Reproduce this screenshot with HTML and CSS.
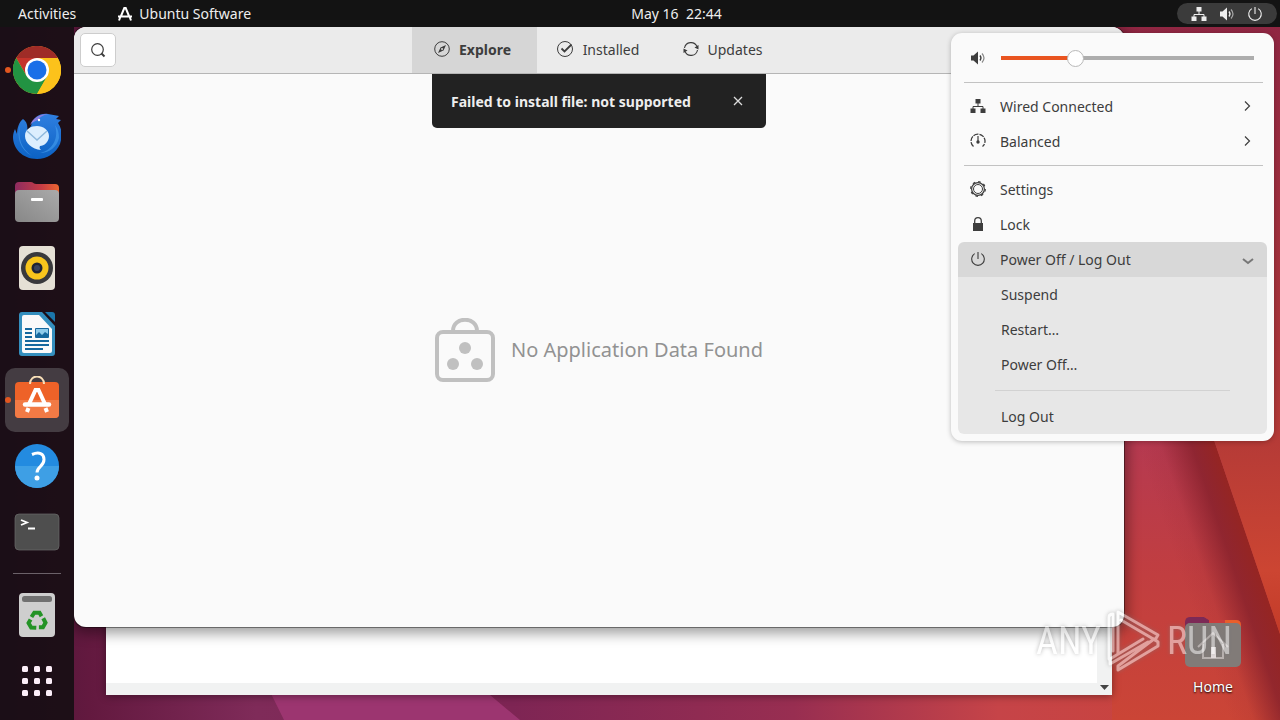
FILE: index.html
```html
<!DOCTYPE html>
<html lang="en">

<head>
    <meta charset="UTF-8">
    <meta name="viewport" content="width=device-width, initial-scale=1.0">
    <title>Ubuntu Software</title>
    <link rel="stylesheet" href="styles.css">
</head>

<body>
    <!-- shared symbols -->
    <svg class="symbols" aria-hidden="true">
        <symbol id="network" viewBox="0 0 16 16">
            <path d="M5.500 1h5v4.500h-5zM.5 10.500h5V15h-5zM10.500 10.500h5V15h-5z" fill="currentColor"/>
            <path d="M8 5v3.500M3 11V8.500h10V11" fill="none" stroke="currentColor"/>
        </symbol>
        <symbol id="volume" viewBox="0 0 16 16">
            <path d="M1 5.500h2.500L8 1.500v13L3.500 10.500H1z" fill="currentColor"/>
            <path d="M10 5.500q2 2.500 0 5" fill="none" stroke="currentColor" stroke-width="1.300"/>
            <path d="M12 3.500q4 4.500 0 9" fill="none" stroke="currentColor" stroke-width="1.200" opacity=".6"/>
        </symbol>
        <symbol id="power" viewBox="0 0 16 16">
            <path d="M8 1v7M4.800 2.600a6.300 6.300 0 1 0 6.400 0" fill="none" stroke="currentColor" stroke-width="1.100"/>
        </symbol>
        <symbol id="chevron" viewBox="0 0 16 16">
            <path d="M6 3.500l4.500 4.500L6 12.500" fill="none" stroke="currentColor" stroke-width="1.200"/>
        </symbol>
    </svg>

    <header class="topbar">
        <div class="topbar-left">
            <button class="activities">Activities</button>
            <button class="app-menu">
                <svg width="16" height="16" viewBox="0 0 16 16" fill="none" stroke="#fff" stroke-width="2">
                    <path d="M4 10L7.300 2h1.400L12 10M1 10.500h14M3.300 11L2 14.500M12.700 11l1.300 3.500"/>
                </svg>
                Ubuntu Software
            </button>
        </div>
        <button class="clock">May 16&nbsp; 22:44</button>
        <button class="status" aria-label="System menu">
            <svg width="16" height="16"><use href="#network"/></svg>
            <svg width="16" height="16"><use href="#volume"/></svg>
            <svg width="16" height="16"><use href="#power"/></svg>
        </button>
    </header>

    <main class="desktop">
        <svg class="wallpaper" viewBox="0 0 1280 720" preserveAspectRatio="none" aria-hidden="true">
            <defs>
                <linearGradient id="base" x1="0" x2="1" y1="0" y2="0">
                    <stop offset="0" stop-color="#4b1638"/>
                    <stop offset=".07" stop-color="#63193f"/>
                    <stop offset=".2" stop-color="#7f2b59"/>
                    <stop offset=".4" stop-color="#7e2554"/>
                    <stop offset=".62" stop-color="#982e51"/>
                    <stop offset=".78" stop-color="#c64448"/>
                    <stop offset="1" stop-color="#ca4337"/>
                </linearGradient>
                <linearGradient id="right" x1="0" x2="0" y1="0" y2="1">
                    <stop offset="0" stop-color="#7b2045"/>
                    <stop offset=".3" stop-color="#a02c45"/>
                    <stop offset=".62" stop-color="#b63a50"/>
                    <stop offset=".8" stop-color="#c13e40"/>
                    <stop offset="1" stop-color="#cb4536"/>
                </linearGradient>
                <linearGradient id="fold" gradientUnits="userSpaceOnUse" x1="1143" y1="464" x2="1214" y2="440">
                    <stop offset="0" stop-color="#85202a" stop-opacity="0"/>
                    <stop offset=".3" stop-color="#85202a" stop-opacity=".1"/>
                    <stop offset=".7" stop-color="#85202a" stop-opacity=".8"/>
                    <stop offset="1" stop-color="#962522"/>
                </linearGradient>
                <linearGradient id="corner" x1="0" x2="0" y1="0" y2="1">
                    <stop offset="0" stop-color="#8e2543"/>
                    <stop offset=".6" stop-color="#ab3639"/>
                    <stop offset=".9" stop-color="#cc4532"/>
                    <stop offset="1" stop-color="#c33b28"/>
                </linearGradient>
            </defs>
            <rect width="1280" height="720" fill="url(#base)"/>
            <path d="M238 627h205l47 68 30 25H284z" fill="#9c3570"/>
            <path d="M1112 0h168v720h-168z" fill="url(#right)"/>
            <path d="M1112 440h102l66 194v86h-168z" fill="url(#fold)"/>
            <path d="M1060 0h220v634L1214 440z" fill="url(#corner)"/>
        </svg>

        <nav class="dock" aria-label="Dock">
            <button class="dock-item running" aria-label="Google Chrome">
                <svg width="48" height="48" viewBox="0 0 48 48">
                    <circle cx="24" cy="24" r="24" fill="#fcc21b"/>
                    <path d="M3.200 12A24 24 0 0 1 44.800 12H24L13.600 30z" fill="#c5332b"/>
                    <path d="M3.200 12A24 24 0 0 0 24 48L34.400 30 24 24 13.600 30z" fill="#229342"/>
                    <path d="M24 12h20.800A24 24 0 0 1 24 48l10.400-18z" fill="#fcc21b"/>
                    <path d="M3.200 12A24 24 0 0 1 44.800 12z" fill="#8f2926" opacity=".7"/>
                    <circle cx="24" cy="24" r="12" fill="#fff"/>
                    <circle cx="24" cy="24" r="9.500" fill="#1a6fe8"/>
                </svg>
            </button>
            <button class="dock-item" aria-label="Thunderbird">
                <svg width="48" height="48" viewBox="0 0 48 48">
                    <defs>
                        <linearGradient id="bird" x1="0" x2="0" y1="0" y2="1">
                            <stop offset="0" stop-color="#2f7fe0"/>
                            <stop offset="1" stop-color="#0c62c4"/>
                        </linearGradient>
                    </defs>
                    <path d="M10 7c4 3 5 7 4 12l4-5C20 5 27 1 35 2l11 2-3 3 5 1-3 3c5 7 4 15 2 21-4 9-13 15-23 15C9 47 0 36 0 25c0-3 1-6 2-8l2 5C4 16 6 10 10 7z" fill="url(#bird)"/>
                    <path d="M7 13c-4 12 0 25 12 31C8 36 5 27 7 13zM42 13c4 13-2 25-15 28 9 0 17-6 19-15 0-5-1-9-4-13z" fill="#4ba4f2" opacity=".55"/>
                    <path d="M17 13C20 6 26 2 35 2c-4 1-7 2-10 6-3 1-5 2-8 5z" fill="#8c7fe0"/>
                    <path d="M12 24c0-7 6-10 12-10s12 4 12 10-5 10-9 10c-1 2 0 3 1 4-9-1-16-7-16-14z" fill="#dceefe"/>
                    <path d="M14 19l10 9 10-9" fill="none" stroke="#8fb9dd" stroke-width="1.500"/>
                    <circle cx="26" cy="8" r="1.200" fill="#fff"/>
                </svg>
            </button>
            <button class="dock-item" aria-label="Files">
                <svg width="48" height="48" viewBox="0 0 48 48">
                    <defs>
                        <linearGradient id="folder" x1="0" x2="1" y1="0" y2="0">
                            <stop offset="0" stop-color="#8d2b60"/>
                            <stop offset=".6" stop-color="#c63d45"/>
                            <stop offset="1" stop-color="#ec6630"/>
                        </linearGradient>
                        <linearGradient id="grey" x1="0" x2="1" y1="1" y2="0">
                            <stop offset="0" stop-color="#878787"/>
                            <stop offset="1" stop-color="#aaa"/>
                        </linearGradient>
                    </defs>
                    <path d="M2 8q0-4 4-4h12q2 0 3 1.500L23 6h19q4 0 4 4v15H2z" fill="url(#folder)"/>
                    <rect x="2" y="12" width="44" height="32" rx="4" fill="url(#grey)"/>
                    <rect x="18" y="20" width="12" height="3" rx="1" fill="#fff"/>
                </svg>
            </button>
            <button class="dock-item" aria-label="Rhythmbox">
                <svg width="48" height="48" viewBox="0 0 48 48">
                    <rect x="6" y="2" width="36" height="44" rx="4" fill="#e5e0d5"/>
                    <circle cx="24" cy="24" r="16" fill="#39393c"/>
                    <circle cx="24" cy="24" r="11.500" fill="#f8c51c"/>
                    <circle cx="24" cy="24" r="5.500" fill="#202433"/>
                    <circle cx="24" cy="24" r="3" fill="#39435d"/>
                </svg>
            </button>
            <button class="dock-item" aria-label="LibreOffice Writer">
                <svg width="48" height="48" viewBox="0 0 48 48">
                    <path d="M9 2h20l13 14v27q0 3-3 3H9q-3 0-3-3V5q0-3 3-3z" fill="#348fbe"/>
                    <path d="M32 2h7q3 0 3 3v7z" fill="#1b76aa"/>
                    <path d="M9 7q0-2 2-2h15l13 14v22q0 2-2 2H11q-2 0-2-2z" fill="#fafafa"/>
                    <path d="M12 19h7M12 23h7M12 27h7M12 31h24M12 35h24M12 39h18" stroke="#16689e" stroke-width="2"/>
                    <rect x="22" y="18" width="14" height="10" rx="1" fill="#16689e"/>
                    <path d="M23 19h12v5l-3-2-3 3-3-3-3 3z" fill="#8fcbea"/>
                </svg>
            </button>
            <button class="dock-item running active" aria-label="Ubuntu Software">
                <svg width="48" height="48" viewBox="0 0 48 48">
                    <rect x="2" y="6" width="44" height="36" rx="4" fill="#ee6228"/>
                    <path d="M2 24h44v14q0 4-4 4H6q-4 0-4-4z" fill="#f27a45"/>
                    <path d="M17 8c0-10 14-10 14 0" fill="none" stroke="#f8dfb8" stroke-width="2"/>
                    <path d="M16 28l6.500-14h3L32 28" fill="none" stroke="#fff" stroke-width="4"/>
                    <path d="M12 28.500h24" stroke="#fff" stroke-width="4.500" stroke-linecap="round"/>
                    <path d="M15.500 32L14 36M32.500 32l1.500 4" stroke="#fff" stroke-width="4"/>
                </svg>
            </button>
            <button class="dock-item" aria-label="Help">
                <svg width="48" height="48" viewBox="0 0 48 48">
                    <circle cx="24" cy="24" r="22" fill="#238be0"/>
                    <path d="M2 24h44a22 22 0 0 1-44 0z" fill="#3e9fe5"/>
                    <path d="M19 12.500c7-3 12-1 12 5 0 7-7 7-7 13" fill="none" stroke="#fff" stroke-width="3"/>
                    <circle cx="24" cy="36" r="2.500" fill="#fff"/>
                </svg>
            </button>
            <button class="dock-item" aria-label="Terminal">
                <svg width="48" height="48" viewBox="0 0 48 48">
                    <rect x="2" y="6" width="44" height="36" rx="4" fill="#4e4e4e" stroke="#6c6c6c" stroke-width=".7"/>
                    <path d="M8 12l6 2.500L8 17M15 20.500h7" fill="none" stroke="#fff" stroke-width="1.800"/>
                </svg>
            </button>
            <hr>
            <button class="dock-item" aria-label="Trash">
                <svg width="48" height="48" viewBox="0 0 48 48">
                    <rect x="6" y="2" width="36" height="44" rx="4" fill="#cecece"/>
                    <rect x="9" y="5" width="30" height="6" rx="2.500" fill="#707070"/>
                    <g fill="none" stroke="#249326" stroke-width="4">
                        <path id="arrow" d="M18.500 26l2.800-4.300h5.200l2 3.500"/>
                        <use href="#arrow" transform="rotate(120 24 30)"/>
                        <use href="#arrow" transform="rotate(240 24 30)"/>
                    </g>
                </svg>
            </button>
            <button class="dock-item" aria-label="Show Applications">
                <svg width="48" height="48" viewBox="0 0 48 48" fill="#fbeef8">
                    <g id="apps-row">
                        <rect x="9" y="9" width="6" height="6" rx="1.500"/>
                        <rect x="21" y="9" width="6" height="6" rx="1.500"/>
                        <rect x="33" y="9" width="6" height="6" rx="1.500"/>
                    </g>
                    <use href="#apps-row" y="12"/>
                    <use href="#apps-row" y="24"/>
                </svg>
            </button>
        </nav>

        <div class="workspace">
            <a class="home" href="#home">
                <svg width="64" height="60" viewBox="0 0 64 60">
                    <path d="M4 9q0-5 5-5h14l5 3h27q5 0 5 5v12H4z" fill="#e95e2b"/>
                    <path d="M27 7h17v8H27z" fill="#c93c3c"/>
                    <path d="M4 9q0-5 5-5h14l5 3v9H4z" fill="#7d2956"/>
                    <rect x="4" y="10" width="56" height="44" rx="5" fill="#817b78"/>
                    <path d="M17 34l15-14 15 14M22 31v14h20V31" fill="none" stroke="#b9b2b0" stroke-width="2"/>
                    <path d="M30 34h5v11h-5z" fill="#e4dddd"/>
                </svg>
                Home
            </a>

            <section class="back-window" aria-label="Background window">
                <div class="back-page"></div>
                <div class="scroll-y">
                    <svg width="9" height="5" viewBox="0 0 9 5"><path d="M0 0h9L4.500 5z" fill="#444"/></svg>
                </div>
                <div class="scroll-x"></div>
            </section>

            <section class="software" aria-label="Ubuntu Software">
                <div class="headerbar">
                    <button class="search" aria-label="Search">
                        <svg width="16" height="16" viewBox="0 0 16 16" fill="none" stroke="#3d3d3d" stroke-width="1.200">
                            <circle cx="7.500" cy="7.500" r="5.800"/>
                            <path d="M11.500 11.500l3 3" stroke-width="2"/>
                        </svg>
                    </button>
                    <div class="tabs">
                        <button class="tab selected">
                            <svg width="16" height="16" viewBox="0 0 16 16">
                                <circle cx="8" cy="8" r="7.300" fill="none" stroke="#3d3d3d"/>
                                <path d="M12 4L9.500 9.500 4 12l2.500-5.500zM8 7a1 1 0 1 0 .1 0z" fill="#3d3d3d" fill-rule="evenodd"/>
                            </svg>
                            Explore
                        </button>
                        <button class="tab">
                            <svg width="18" height="18" viewBox="0 0 18 18" fill="none" stroke="#3d3d3d">
                                <circle cx="9" cy="9" r="7.500"/>
                                <path d="M5.500 8.500l3 3 7-7" stroke-width="1.800"/>
                            </svg>
                            Installed
                        </button>
                        <button class="tab">
                            <svg width="16" height="16" viewBox="0 0 16 16">
                                <path d="M1.500 7A6.600 6.600 0 0 1 14 5.500M14.500 9A6.600 6.600 0 0 1 2 10.500" fill="none" stroke="#3d3d3d" stroke-width="1.100"/>
                                <path d="M15.500 4v4.500l-4-2zM.5 12V7.500l4 2z" fill="#3d3d3d"/>
                            </svg>
                            Updates
                        </button>
                    </div>
                </div>
                <div class="content">
                    <div class="toast" role="alert">
                        Failed to install file: not supported
                        <button aria-label="Close">
                            <svg width="10" height="10" viewBox="0 0 10 10"><path d="M1 1l8 8M9 1L1 9" stroke="#ddd" stroke-width="1.300"/></svg>
                        </button>
                    </div>
                    <div class="empty">
                        <svg width="60" height="64" viewBox="0 0 60 64">
                            <path d="M18 13C18-2 42-2 42 13" fill="none" stroke="#c0c0c0" stroke-width="4"/>
                            <rect x="2" y="14" width="56" height="48" rx="6" fill="none" stroke="#c0c0c0" stroke-width="4"/>
                            <g fill="#c0c0c0">
                                <circle cx="30" cy="30" r="6"/>
                                <circle cx="18" cy="46" r="6"/>
                                <circle cx="42" cy="46" r="6"/>
                            </g>
                        </svg>
                        <p>No Application Data Found</p>
                    </div>
                </div>
            </section>
        </div>
    </main>

    <div class="system-menu">
        <div class="volume">
            <label for="volume-level" aria-label="Volume"><svg width="16" height="16"><use href="#volume"/></svg></label>
            <input type="range" id="volume-level" min="0" max="100" value="28">
        </div>
        <hr>
        <button class="item">
            <svg width="16" height="16"><use href="#network"/></svg>
            <span>Wired Connected</span>
            <svg width="16" height="16"><use href="#chevron"/></svg>
        </button>
        <button class="item">
            <svg width="16" height="16" viewBox="0 0 16 16">
                <path d="M3.500 13.500A7 7 0 1 1 12.500 13.500" fill="none" stroke="currentColor" stroke-width="1.300" stroke-dasharray="5 1"/>
                <path d="M8 3v6" stroke="currentColor" stroke-width="1.200"/>
                <circle cx="8" cy="9" r="1.700" fill="currentColor"/>
            </svg>
            <span>Balanced</span>
            <svg width="16" height="16"><use href="#chevron"/></svg>
        </button>
        <hr>
        <button class="item">
            <svg width="16" height="16" viewBox="0 0 16 16" fill="none" stroke="currentColor">
                <circle cx="8" cy="8" r="6.400" stroke-width="1.200"/>
                <circle cx="8" cy="8" r="7.300" stroke-width="1.200" stroke-dasharray="2.600 3.130"/>
                <circle cx="8" cy="8" r="4.500"/>
            </svg>
            <span>Settings</span>
        </button>
        <button class="item">
            <svg width="16" height="16" viewBox="0 0 16 16">
                <path d="M3 7h10v8H3z" fill="currentColor"/>
                <path d="M4.700 7V5a3.300 3.300 0 0 1 6.600 0v2" fill="none" stroke="currentColor" stroke-width="1.300"/>
            </svg>
            <span>Lock</span>
        </button>
        <button class="item open" aria-expanded="true">
            <svg width="16" height="16"><use href="#power"/></svg>
            <span>Power Off / Log Out</span>
            <svg width="16" height="16" viewBox="0 0 16 16">
                <path d="M4 8l5 4 5-4" fill="none" stroke="#777" stroke-width="2"/>
            </svg>
        </button>
        <div class="submenu">
            <button class="item">Suspend</button>
            <button class="item">Restart…</button>
            <button class="item">Power Off…</button>
            <hr>
            <button class="item">Log Out</button>
        </div>
    </div>

    <div class="watermark">
        <span>ANY</span>
        <svg width="56" height="64" viewBox="0 0 56 64" fill="none" stroke="#fff" stroke-width="3" stroke-linejoin="round" stroke-linecap="round">
            <path d="M3 50V8q0-3 4-3v37"/>
            <path d="M12 44V3l40 23-3 5-34-20"/>
            <path d="M4 50l33-20M4 50v5l38-22M12 57v4l40-24v-4l-4-3z"/>
        </svg>
        <span>RUN</span>
    </div>
</body>

</html>
```

FILE: styles.css
```css
* {
    box-sizing: border-box;
}

body {
    display: flex;
    flex-direction: column;
    min-height: 100vh;
    margin: 0;
    background-color: #63193f;
    font-family: "Noto Sans", "Open Sans", sans-serif;
    font-size: 14px;
    color: #3d3d3d;
}

button {
    border: none;
    padding: 0;
    background: none;
    font: inherit;
    color: inherit;
}

svg {
    display: block;
    flex: none;
}

.symbols {
    position: absolute;
    width: 0;
    height: 0;
}

/* top bar */

.topbar {
    display: grid;
    grid-template-columns: 1fr auto 1fr;
    align-items: center;
    height: 27px;
    padding: 0 3px 0 76px;
    background-color: #131313;
    color: #eee;
}

.topbar-left {
    display: flex;
    gap: 41px;
    margin-left: -58px;
}

.app-menu {
    display: flex;
    align-items: center;
    gap: 6px;
}

.status {
    display: flex;
    align-items: center;
    justify-self: end;
    gap: 12px;
    height: 21px;
    padding: 0 14px;
    border-radius: 11px;
    background-color: #3b3b3b;
}

/* desktop */

.desktop {
    position: relative;
    display: flex;
    flex: 1;
}

.wallpaper {
    position: absolute;
    top: -27px;
    left: 0;
    width: 100%;
    height: calc(100% + 27px);
    z-index: -1;
}

.dock {
    display: flex;
    flex-direction: column;
    align-items: center;
    gap: 2px;
    width: 74px;
    padding-top: 11px;
    background-color: rgba(20, 14, 18, 0.88);
}

.dock hr {
    width: 48px;
    margin: 7px 0;
    border: none;
    border-top: 1px solid #6b6169;
}

.dock-item {
    position: relative;
    display: flex;
    align-items: center;
    justify-content: center;
    width: 64px;
    height: 64px;
    border-radius: 10px;
}

.dock-item.active {
    background-color: #443c42;
}

.dock-item.running::before {
    content: "";
    position: absolute;
    left: 0;
    width: 6px;
    height: 6px;
    border-radius: 50%;
    background-color: #e2561f;
}

.workspace {
    position: relative;
    flex: 1;
    overflow: hidden;
}

.home {
    position: absolute;
    right: 35px;
    bottom: 24px;
    display: flex;
    flex-direction: column;
    align-items: center;
    gap: 4px;
    color: #fff;
    text-decoration: none;
    text-shadow: 0 1px 2px #000;
}

/* windows */

.back-window {
    position: absolute;
    top: 60px;
    right: 168px;
    bottom: 25px;
    left: 32px;
    display: grid;
    grid-template-columns: 1fr 15px;
    grid-template-rows: 1fr 12px;
    background-color: #f1f2f2;
    box-shadow: 0 1px 8px rgba(0, 0, 0, 0.4);
}

.back-page {
    background-color: #fff;
}

.scroll-y {
    display: flex;
    align-items: end;
    justify-content: center;
    grid-row: span 2;
    padding-bottom: 5px;
}

.software {
    position: absolute;
    top: 0;
    right: 156px;
    bottom: 93px;
    left: 0;
    display: flex;
    flex-direction: column;
    overflow: hidden;
    border-radius: 12px;
    background-color: #fafafa;
    box-shadow: 0 0 0 1px rgba(0, 0, 0, 0.4), 0 3px 14px 3px rgba(0, 0, 0, 0.4);
}

.headerbar {
    display: grid;
    grid-template-columns: 1fr auto 1fr;
    align-items: center;
    height: 47px;
    padding: 0 6px;
    border-bottom: 1px solid #b5b5b5;
    background-color: #ebebeb;
}

.search {
    display: flex;
    align-items: center;
    justify-content: center;
    width: 36px;
    height: 34px;
    border: 1px solid #cdcdcd;
    border-radius: 5px;
    background-color: #fff;
}

.tabs {
    display: flex;
    height: 46px;
}

.tab {
    display: flex;
    align-items: center;
    justify-content: center;
    gap: 9px;
    width: 125px;
    padding: 0 3px 2px 0;
}

.tab.selected {
    background-color: #d6d6d6;
    font-weight: bold;
}

.content {
    position: relative;
    display: flex;
    flex: 1;
    align-items: center;
    justify-content: center;
}

.toast {
    position: absolute;
    top: 0;
    display: flex;
    align-items: center;
    justify-content: space-between;
    width: 334px;
    height: 54px;
    padding: 0 17px 0 19px;
    border-radius: 0 0 5px 5px;
    background-color: #222;
    color: #eee;
    font-weight: bold;
}

.toast button {
    padding: 6px;
}

.empty {
    display: flex;
    align-items: center;
    gap: 16px;
    padding-bottom: 2px;
    font-size: 20px;
    color: #929292;
}

.empty p {
    margin: 0;
}

/* system menu */

.system-menu {
    position: absolute;
    top: 33px;
    right: 6px;
    width: 323px;
    padding: 7px;
    border-radius: 11px;
    background-color: #fafafa;
    box-shadow: 0 1px 5px rgba(0, 0, 0, 0.25);
}

.system-menu hr {
    margin: 6px 4px 6px 6px;
    border: none;
    border-top: 1px solid #c2c2c2;
}

.volume {
    display: flex;
    align-items: center;
    gap: 15px;
    height: 36px;
    padding: 0 13px 0 12px;
}

.volume input {
    flex: 1;
    min-width: 0;
    height: 18px;
    margin: 0;
    appearance: none;
    background: linear-gradient(to right, #e95420 30%, #adadad 30%) center / 100% 4px no-repeat;
}

.volume input::-webkit-slider-thumb {
    appearance: none;
    width: 17px;
    height: 17px;
    border: 1px solid #b9b9b9;
    border-radius: 50%;
    background-color: #fff;
}

.item {
    display: flex;
    align-items: center;
    gap: 14px;
    width: 100%;
    height: 35px;
    padding: 0 12px;
    text-align: left;
}

.item svg {
    margin-bottom: 2px;
}

.item span {
    flex: 1;
}

.item.open {
    border-radius: 6px 6px 0 0;
    background-color: #d8d8d8;
}

.submenu {
    border-radius: 0 0 6px 6px;
    background-color: #e7e7e7;
}

.submenu .item {
    padding-left: 43px;
}

.submenu hr {
    margin: 8px 37px;
    border-color: #d2d2d2;
}

.watermark {
    position: absolute;
    right: 48px;
    bottom: 47px;
    display: flex;
    align-items: center;
    gap: 5px;
    color: #fff;
    font-family: "Liberation Sans Narrow", "Roboto Condensed", "Liberation Sans", sans-serif;
    font-size: 38px;
    opacity: 0.5;
    pointer-events: none;
    filter: drop-shadow(0 0 2px #777);
}
```
